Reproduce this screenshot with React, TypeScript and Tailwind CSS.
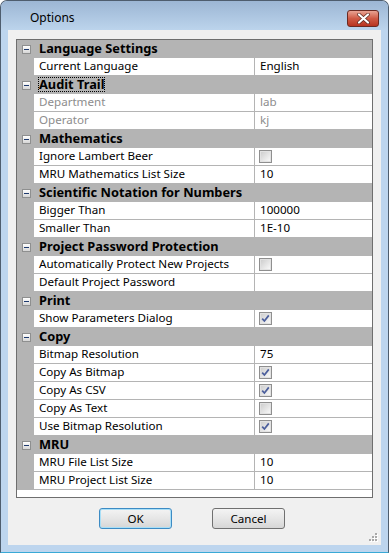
import React from "react";

type Row =
  | { kind: "cat"; label: string; focused?: boolean }
  | { kind: "text"; label: string; value: string; disabled?: boolean }
  | { kind: "check"; label: string; checked: boolean };

const rows: Row[] = [
  { kind: "cat", label: "Language Settings" },
  { kind: "text", label: "Current Language", value: "English" },
  { kind: "cat", label: "Audit Trail", focused: true },
  { kind: "text", label: "Department", value: "lab", disabled: true },
  { kind: "text", label: "Operator", value: "kj", disabled: true },
  { kind: "cat", label: "Mathematics" },
  { kind: "check", label: "Ignore Lambert Beer", checked: false },
  { kind: "text", label: "MRU Mathematics List Size", value: "10" },
  { kind: "cat", label: "Scientific Notation for Numbers" },
  { kind: "text", label: "Bigger Than", value: "100000" },
  { kind: "text", label: "Smaller Than", value: "1E-10" },
  { kind: "cat", label: "Project Password Protection" },
  { kind: "check", label: "Automatically Protect New Projects", checked: false },
  { kind: "text", label: "Default Project Password", value: "" },
  { kind: "cat", label: "Print" },
  { kind: "check", label: "Show Parameters Dialog", checked: true },
  { kind: "cat", label: "Copy" },
  { kind: "text", label: "Bitmap Resolution", value: "75" },
  { kind: "check", label: "Copy As Bitmap", checked: true },
  { kind: "check", label: "Copy As CSV", checked: true },
  { kind: "check", label: "Copy As Text", checked: false },
  { kind: "check", label: "Use Bitmap Resolution", checked: true },
  { kind: "cat", label: "MRU" },
  { kind: "text", label: "MRU File List Size", value: "10" },
  { kind: "text", label: "MRU Project List Size", value: "10" },
];

function MinusBox() {
  return (
    <span className="flex h-[9px] w-[9px] items-center justify-center border border-[#8e8f8f] bg-gradient-to-b from-white to-[#d6d6d6]">
      <span className="h-px w-[5px] bg-[#1e3a6e]" />
    </span>
  );
}

function CheckBox({ checked }: { checked: boolean }) {
  return (
    <span className="flex h-[13px] w-[13px] items-center justify-center border border-[#8f8f8f] bg-[#f4f4f4]">
      <span className="flex h-[11px] w-[11px] items-center justify-center border border-[#e2e2e2] bg-gradient-to-br from-[#cfcfcf] to-[#f8f8f8]">
        {checked && (
          <svg width="9" height="9" viewBox="0 0 9 9">
            <path d="M1.2 4.6 L3.4 7 L7.8 1.4" fill="none" stroke="#4b5e9c" strokeWidth="1.7" />
          </svg>
        )}
      </span>
    </span>
  );
}

function GridRow({ row }: { row: Row }) {
  if (row.kind === "cat") {
    return (
      <div className="flex h-[18px] items-center bg-[#b4b4b4]">
        <span className="ml-[5px] mr-[7px]">
          <MinusBox />
        </span>
        <span
          className={`mb-px px-[1px] text-[12.8px] font-bold leading-[15px] text-black ${
            row.focused ? "outline-1 -outline-offset-1 outline-dotted outline-black" : ""
          }`}
        >
          {row.label}
        </span>
      </div>
    );
  }
  const labelColor = row.kind === "text" && row.disabled ? "text-[#8d8d8d]" : "text-black";
  return (
    <div className="flex h-[18px]">
      <div className="w-[17px] bg-[#b4b4b4]" />
      <div className="flex flex-1 border-b border-[#b4b4b4] bg-white">
        <div className={`w-[221px] border-r border-[#b4b4b4] pl-[5px] text-[11.6px] leading-[15px] ${labelColor}`}>
          {row.label}
        </div>
        <div className={`flex flex-1 items-center pl-[4px] text-[11.6px] leading-[15px] ${labelColor}`}>
          {row.kind === "check" ? (
            <CheckBox checked={row.checked} />
          ) : (
            <span className="mb-[2px] pl-px">{row.value}</span>
          )}
        </div>
      </div>
    </div>
  );
}

function Grip() {
  const dots = [
    [6, 0],
    [3, 3],
    [6, 3],
    [0, 6],
    [3, 6],
    [6, 6],
  ];
  return (
    <svg width="9" height="9" className="absolute bottom-[3px] right-[3px]">
      {dots.map(([x, y], i) => (
        <g key={i}>
          <rect x={x + 1} y={y + 1} width="2" height="2" fill="#ffffff" />
          <rect x={x} y={y} width="2" height="2" fill="#a8a8a8" />
        </g>
      ))}
    </svg>
  );
}

export default function App() {
  return (
    <div
      className="flex h-[553px] w-[389px] flex-col overflow-hidden rounded-t-[7px] border border-[#4e5d6e] border-b-[#39a9d6] bg-[#bdd5ee] text-[12px]"
      style={{ fontFamily: '"Noto Sans", "Open Sans", sans-serif' }}
    >
      <div className="flex h-[29px] shrink-0 items-start bg-gradient-to-b from-[#9cb6d4] to-[#bcd4ec] pl-[29px] pr-[9px]">
        <span className="flex-1 pt-[9px] text-[12px] leading-[16px] text-black">Options</span>
        <span className="mt-[9px] flex h-[17px] w-[32px] items-center justify-center rounded-[3px] border border-[#6b2a22] bg-gradient-to-b from-[#e8a393] via-[#cf5a45] to-[#b8331f]">
          <svg width="13" height="11" viewBox="0 0 13 11">
            <path d="M2 1.5 L11 9.5 M11 1.5 L2 9.5" stroke="#5a2a22" strokeWidth="3.6" strokeLinecap="round" />
            <path d="M2 1.5 L11 9.5 M11 1.5 L2 9.5" stroke="#ffffff" strokeWidth="2.2" strokeLinecap="round" />
          </svg>
        </span>
      </div>
      <div className="relative mx-[7px] mb-[7px] flex flex-1 flex-col bg-[#f0f0f0] px-[8px] pt-[9px]">
        <div className="h-[459px] w-[357px] border border-[#6e6e6e] bg-white">
          {rows.map((r, i) => (
            <GridRow key={i} row={r} />
          ))}
        </div>
        <div className="mt-[10px] flex pl-[83px]">
          <button className="h-[21px] w-[73px] rounded-[3px] border border-[#3c8bc4] bg-gradient-to-b from-[#f4f4f4] via-[#e6e6e6] to-[#d6d6d6] text-[11.6px] leading-[17px] text-black shadow-[inset_0_0_0_1px_#a9dff7]">
            OK
          </button>
          <button className="ml-[40px] h-[21px] w-[73px] rounded-[3px] border border-[#707070] bg-gradient-to-b from-[#f4f4f4] via-[#e6e6e6] to-[#d6d6d6] text-[11.6px] leading-[17px] text-black">
            Cancel
          </button>
        </div>
        <Grip />
      </div>
    </div>
  );
}
